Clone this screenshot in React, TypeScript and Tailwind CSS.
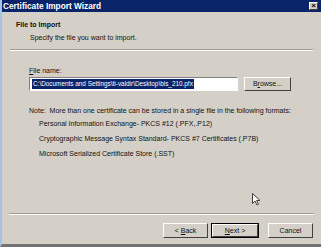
export default function App() {
  const font = { fontFamily: '"Liberation Sans", Arial, sans-serif' };
  return (
    <div
      className="relative w-[321px] h-[247px] overflow-hidden bg-[#d4d0c8] border-l-2 border-l-[#a6c2e4] border-b-[3px] border-b-[#727272] flex flex-col text-[#111]"
      style={font}
    >
      {/* Title bar */}
      <div className="h-[12px] bg-[#0a246a] flex items-center justify-between pl-[1px] pr-[3px]">
        <span className="text-white font-bold text-[8.3px] leading-none">Certificate Import Wizard</span>
        <div className="w-[9px] h-[8px] bg-[#d4d0c8] border border-t-white border-l-white border-r-[#404040] border-b-[#404040] flex items-center justify-center text-[8px] leading-none font-bold text-black">
          ×
        </div>
      </div>

      {/* Header */}
      <div className="pl-[14px] pt-[9px] text-[7px] leading-[8px]">
        <div className="font-bold">File to Import</div>
        <div className="pl-[14px] mt-[5px]">Specify the file you want to import.</div>
      </div>
      <div className="mx-[8px] mt-[7px] border-t border-t-[#a09c94] border-b border-b-white" />

      {/* Body */}
      <div className="pl-[27px] pr-[7px] pt-[16px] text-[7px] leading-[8px]">
        <div><span className="underline">F</span>ile name:</div>
        <div className="mt-[2px] flex items-center gap-[6px]">
          <div className="w-[209px] h-[14px] bg-white border border-t-[#808080] border-l-[#808080] border-r-white border-b-white flex items-center pl-[2px]">
            <span className="bg-[#0a246a] text-white px-[1px] h-[10px] flex items-center whitespace-nowrap text-[6.4px]">
              C:\Documents and Settings\ti-valdir\Desktop\bis_210.pfx
            </span>
          </div>
          <div className="w-[47px] h-[14px] border border-t-white border-l-white border-r-[#404040] border-b-[#404040] flex items-center justify-center">
            B<span className="underline">r</span>owse...
          </div>
        </div>
        <div className="mt-[16px] whitespace-nowrap">
          Note:&nbsp; More than one certificate can be stored in a single file in the following formats:
        </div>
        <div className="pl-[10px] mt-[5px] flex flex-col gap-[7px]">
          <div>Personal Information Exchange- PKCS #12 (.PFX,.P12)</div>
          <div>Cryptographic Message Syntax Standard- PKCS #7 Certificates (.P7B)</div>
          <div>Microsoft Serialized Certificate Store (.SST)</div>
        </div>
      </div>

      <div className="flex-1" />

      <div className="mx-[7px] border-t border-t-[#a09c94] border-b border-b-white" />
      <div className="flex justify-end gap-[3px] pr-[8px] pt-[8px] pb-[6px] text-[7px] leading-none">
        <div className="w-[45px] h-[15px] border border-t-white border-l-white border-r-[#404040] border-b-[#404040] flex items-center justify-center">
          &lt; <span className="underline ml-[2px]">B</span>ack
        </div>
        <div className="w-[48px] h-[15px] border border-black flex items-center justify-center">
          <div className="w-[46px] h-[13px] border border-t-white border-l-white border-r-[#404040] border-b-[#404040] flex items-center justify-center">
            <span className="underline">N</span>ext &gt;
          </div>
        </div>
        <div className="w-[45px] h-[15px] ml-[6px] border border-t-white border-l-white border-r-[#404040] border-b-[#404040] flex items-center justify-center">
          Cancel
        </div>
      </div>

      {/* Mouse cursor */}
      <svg className="absolute left-[250px] top-[193px]" width="9" height="13" viewBox="0 0 9 13">
        <path d="M0.5 0.5 L0.5 10.5 L3 8 L5 12 L6.5 11.3 L4.6 7.5 L8 7.5 Z" fill="white" stroke="#404040" strokeWidth="1" />
      </svg>
    </div>
  );
}
